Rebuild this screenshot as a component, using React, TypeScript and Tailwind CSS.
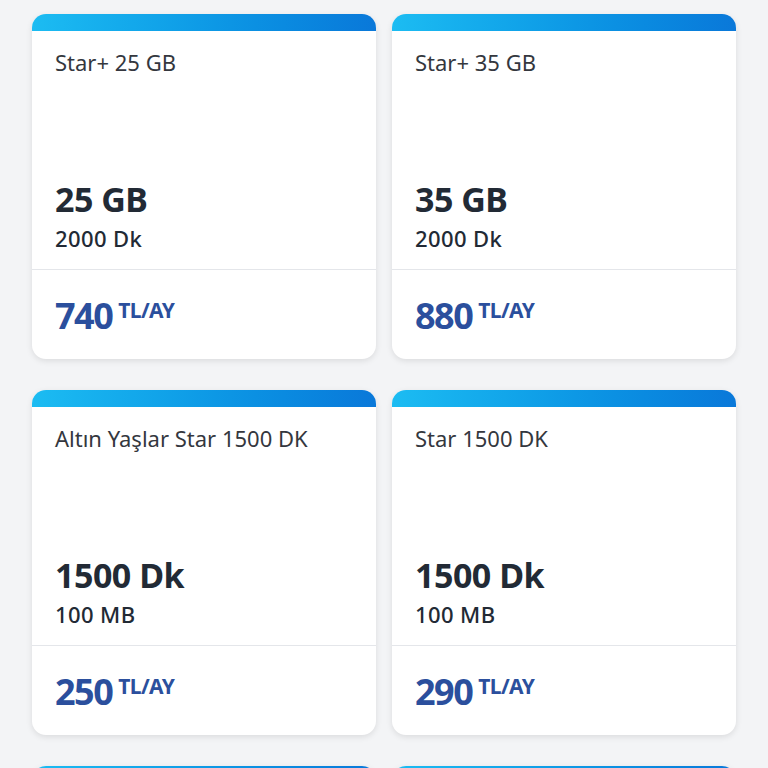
import React from "react";

type Plan = { title: string; main: string; sub: string; price: string };

const plans: Plan[] = [
  { title: "Star+ 25 GB", main: "25 GB", sub: "2000 Dk", price: "740" },
  { title: "Star+ 35 GB", main: "35 GB", sub: "2000 Dk", price: "880" },
  { title: "Altın Yaşlar Star 1500 DK", main: "1500 Dk", sub: "100 MB", price: "250" },
  { title: "Star 1500 DK", main: "1500 Dk", sub: "100 MB", price: "290" },
];

function Card({ p }: { p: Plan }) {
  return (
    <div className="flex h-[345px] flex-col overflow-hidden rounded-[14px] bg-white shadow-[0_2px_6px_rgba(0,0,0,0.10)]">
      <div className="h-[17px] shrink-0 bg-gradient-to-r from-[#1cbcf2] to-[#0a78d9]" />
      <div className="flex h-[238px] flex-col justify-between px-[23px] pb-[17px] pt-[17px]">
        <div className="text-[22px] leading-[28px] text-[#34373e]">{p.title}</div>
        <div>
          <div className="text-[34px] font-bold leading-[40px] tracking-[-0.5px] text-[#222a35]">{p.main}</div>
          <div className="mt-[5px] text-[22px] font-medium leading-[28px] tracking-[0.4px] text-[#222a35]">{p.sub}</div>
        </div>
      </div>
      <div className="h-px shrink-0 bg-[#e4e6ea]" />
      <div className="flex items-start px-[23px] pt-[26px]">
        <span className="text-[36px] font-bold leading-[40px] tracking-[-1.5px] text-[#2b4f9d]">{p.price}</span>
        <span className="ml-[6px] mt-[2px] text-[21px] font-bold leading-[24px] tracking-[-0.6px] text-[#2b4f9d]">TL/AY</span>
      </div>
    </div>
  );
}

function StubCard() {
  return (
    <div className="flex h-[345px] flex-col overflow-hidden rounded-[14px] bg-white shadow-[0_2px_6px_rgba(0,0,0,0.10)]">
      <div className="h-[17px] shrink-0 bg-gradient-to-r from-[#1cbcf2] to-[#0a78d9]" />
    </div>
  );
}

export default function App() {
  return (
    <div
      className="h-[768px] w-[768px] overflow-hidden bg-[#f3f4f6]"
      style={{ fontFamily: "'Noto Sans', sans-serif" }}
    >
      <div className="grid grid-cols-2 gap-x-[16px] gap-y-[31px] px-[32px] pt-[14px]">
        {plans.map((p, i) => (
          <Card key={i} p={p} />
        ))}
        <StubCard />
        <StubCard />
      </div>
    </div>
  );
}
